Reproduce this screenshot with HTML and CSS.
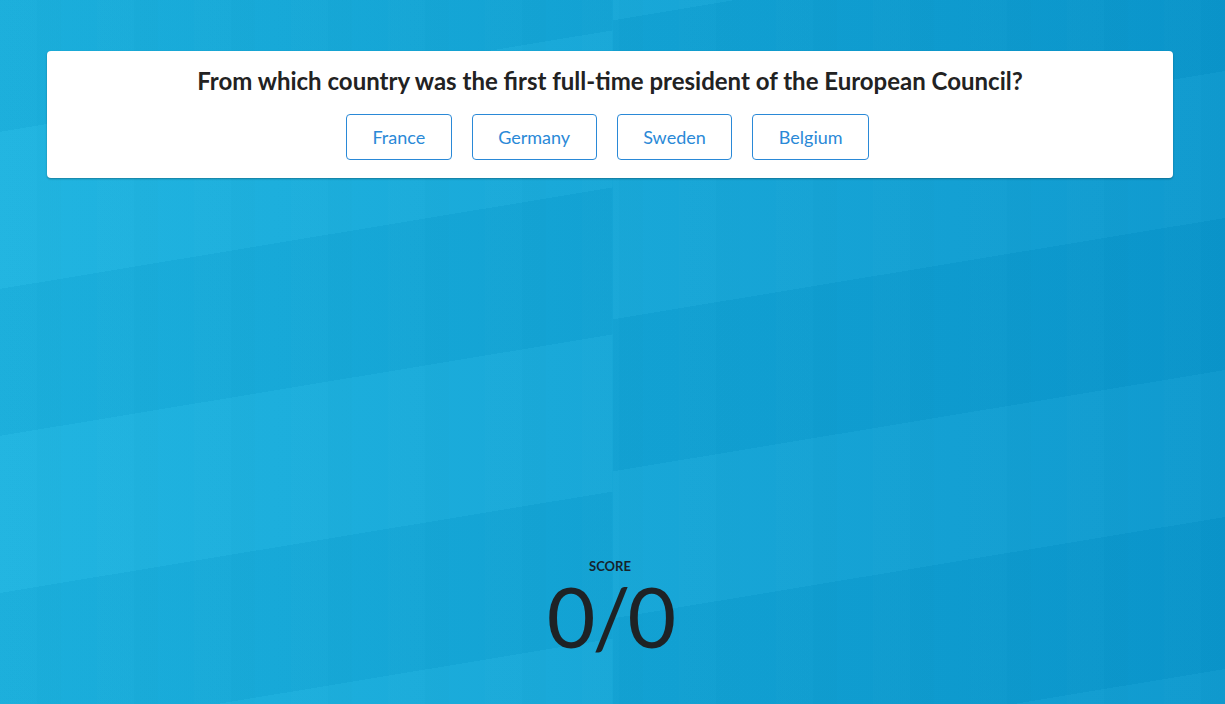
FILE: index.html
```html
<!DOCTYPE html>
<html lang="en">
<head>
<meta charset="utf-8">
<title>Quiz</title>
<link rel="stylesheet" href="styles.css">
</head>
<body>
<div class="page">
  <section class="card">
    <h1 class="question">From which country was the first full-time president of the European Council?</h1>
    <div class="answers">
      <button class="answer">France</button>
      <button class="answer">Germany</button>
      <button class="answer">Sweden</button>
      <button class="answer">Belgium</button>
    </div>
  </section>
  <section class="score">
    <div class="score-label">SCORE</div>
    <div class="score-value">0/0</div>
  </section>
</div>
</body>
</html>
```
FILE: styles.css
```css
html, body {
  margin: 0;
  padding: 0;
  height: 100%;
}

body {
  font-family: Lato, "Open Sans", "Liberation Sans", sans-serif;
  overflow: hidden;
}

.page {
  box-sizing: border-box;
  height: 100vh;
  padding: 51px 52px 0 47px;
  background:
    repeating-linear-gradient(90deg,
      rgba(255,255,255,0.006) 0 37px,
      rgba(0,0,0,0.006) 37px 61px,
      rgba(255,255,255,0) 61px 97px),
    repeating-linear-gradient(170.6deg,
      rgba(255,255,255,0.025) -170px, rgba(255,255,255,0.025) -15px,
      rgba(0,40,90,0.03) -15px, rgba(0,40,90,0.03) 130px) left top / 50% 100% no-repeat,
    repeating-linear-gradient(170.6deg,
      rgba(255,255,255,0.025) 170px, rgba(255,255,255,0.025) 315px,
      rgba(0,40,90,0.03) 315px, rgba(0,40,90,0.03) 465px) right top / 50% 100% no-repeat,
    linear-gradient(to right, #1cb3e0, #0a98ce);
}

.card {
  background: #fff;
  border-radius: 4px;
  box-shadow: 0 1px 2px rgba(0, 0, 0, 0.3);
  padding: 15px 0 18px;
  text-align: center;
}

.question {
  margin: 0;
  font-size: 24px;
  font-weight: 700;
  line-height: 29px;
  color: #222;
}

.answers {
  display: flex;
  justify-content: center;
  gap: 20px;
  margin-top: 19px;
  padding-right: 5px;
}

.answer {
  font-family: inherit;
  font-size: 18px;
  line-height: 22px;
  padding: 11px 25.5px;
  border: 1px solid #2a89d7;
  border-radius: 4px;
  color: #2a89d7;
  background: #fff;
}

.score {
  margin-top: 380px;
  text-align: center;
}

.score-label {
  font-size: 13px;
  font-weight: 700;
  line-height: 16px;
  color: #16232b;
}

.score-value {
  font-size: 84px;
  line-height: 84px;
  font-weight: 400;
  letter-spacing: -3px;
  color: #1e2225;
}
```
